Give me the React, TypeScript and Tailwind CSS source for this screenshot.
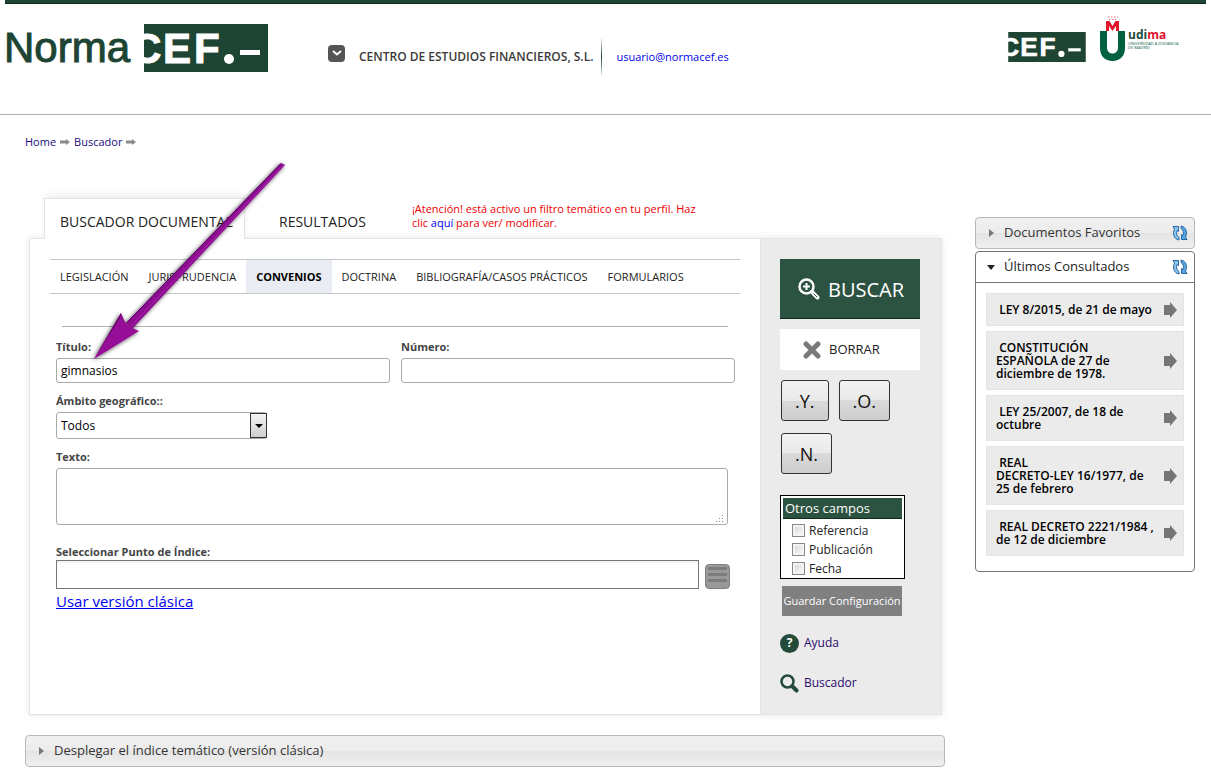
import React, { useState } from "react";

const categories = [
  "LEGISLACIÓN",
  "JURISPRUDENCIA",
  "CONVENIOS",
  "DOCTRINA",
  "BIBLIOGRAFÍA/CASOS PRÁCTICOS",
  "FORMULARIOS",
];

const recentDocs = [
  "LEY 8/2015, de 21 de mayo",
  "CONSTITUCIÓN\nESPAÑOLA de 27 de\ndiciembre de 1978.",
  "LEY 25/2007, de 18 de\noctubre",
  "REAL\nDECRETO-LEY 16/1977, de\n25 de febrero",
  "REAL DECRETO 2221/1984 ,\nde 12 de diciembre",
];

const CefLogo = ({ className }: { className?: string }) => (
  <svg viewBox="0 0 124 48" className={className} role="img" aria-label="CEF.-">
    <rect width="124" height="48" fill="#1e4433" />
    <g
      fill="#fff"
      stroke="#fff"
      strokeWidth="1"
      fontFamily="Liberation Sans, sans-serif"
      fontWeight="700"
      fontSize="42"
    >
      <text x="-13" y="39">C</text>
      <text x="19" y="39">E</text>
      <text x="50" y="39">F</text>
    </g>
    <circle cx="85" cy="35" r="5" fill="#fff" />
    <rect x="96" y="26" width="20" height="5" fill="#fff" />
  </svg>
);

const NormaLogo = () => (
  <svg viewBox="0 0 134 48" className="h-12 w-[134px]" role="img" aria-label="Norma">
    <text
      x="2"
      y="38"
      fill="#1e4433"
      stroke="#1e4433"
      strokeWidth="1"
      fontFamily="Liberation Sans, sans-serif"
      fontSize="42"
    >
      Norma
    </text>
  </svg>
);

const UdimaLogo = () => (
  <svg viewBox="0 0 80 46" className="h-[46px] w-20" role="img" aria-label="udima">
    <path d="M0 15h7v17a5.500 5.500 0 0 0 11 0V15h7v17c0 8-5 13-12.500 13S0 40 0 32z" fill="#04613f" />
    <path d="M6 15V5h3.500l3 5 3-5H19v10h-3v-5l-3.500 5L9 10v5z" fill="#e2142d" />
    <path d="M8 1h1.500M11 1h1.500M14 1h1.500M17 1h1M9 3.500h1.500M12 3.500h1.500M15 3.500h1.500" stroke="#ee7584" strokeWidth="1.200" />
    <text x="28" y="23" fontFamily="Open Sans, sans-serif" fontWeight="700" fontSize="12" fill="#214c3a">
      udi<tspan fill="#e2142d">ma</tspan>
    </text>
    <text x="28" y="29" fontFamily="Open Sans, sans-serif" fontSize="4" fill="#04613f">
      UNIVERSIDAD A DISTANCIA
    </text>
    <text x="28" y="33" fontFamily="Open Sans, sans-serif" fontSize="4" fill="#04613f">
      DE MADRID
    </text>
  </svg>
);

const CrumbArrow = () => (
  <svg viewBox="0 0 10 6" className="h-1.5 w-2.5" aria-hidden="true">
    <path d="M0 1.500h6V0l4 3-4 3V4.500H0z" fill="#8a8a8a" />
  </svg>
);

const RefreshIcon = () => (
  <svg viewBox="0 0 16 16" className="size-4" fill="#8cc4ec" stroke="#2468a4" strokeWidth="1" aria-hidden="true">
    <path d="M1 1.500h5.500v5L5 5.500C4 8.500 4.500 11 7 12.500v2.500C1.500 14 .5 8 2.500 4z" />
    <path d="M1 1.500h5.500v5L5 5.500C4 8.500 4.500 11 7 12.500v2.500C1.500 14 .5 8 2.500 4z" fill="#5aa5dd" transform="rotate(180 8 8)" />
  </svg>
);

const SearchPlusIcon = () => (
  <svg viewBox="0 0 22 22" className="size-[22px]" fill="none" stroke="#fff" aria-hidden="true">
    <circle cx="8.500" cy="8.500" r="7" strokeWidth="2.500" />
    <path d="M8.500 5v7M5 8.500h7" strokeWidth="2" />
    <path d="M14 14l5.500 5.500" strokeWidth="4" strokeLinecap="round" />
    <path d="M15.500 15.500l3.500 3.500" stroke="#2c5341" strokeWidth="1" />
  </svg>
);

const Annotation = () => (
  <svg
    viewBox="0 0 210 210"
    className="pointer-events-none absolute left-[85px] top-[157px] z-20 size-[210px]"
    aria-hidden="true"
  >
    <defs>
      <filter id="shade" x="-20%" y="-20%" width="140%" height="140%">
        <feDropShadow dx="-1" dy="1" stdDeviation="2" floodColor="#000" floodOpacity="0.7" />
      </filter>
    </defs>
    <g filter="url(#shade)">
      <path d="M196 6l4 2L47 172l-6-6z" fill="#8d0d91" />
      <path d="M196 6.500L41 166.500" stroke="#560560" strokeWidth="1" />
      <path d="M198.500 8L46 169" stroke="#ab22ae" strokeWidth="1" />
      <path d="M9 202l27-46 4 9 5 5 9 4z" fill="#960a98" />
      <path d="M9 202l27-46v3z" fill="#5a0660" />
    </g>
  </svg>
);

const Header = () => (
  <header className="border-b border-[#b0b0b0]">
    <div className="mx-[5px] h-1 border-b border-[#0d2a1c] bg-[#1e4433]" />
    <div className="flex h-[110px] items-start pl-0.5 pr-[31px] pt-5">
      <a href="#inicio" className="flex shrink-0 gap-2">
        <NormaLogo />
        <CefLogo className="h-12 w-[124px]" />
      </a>
      <div className="ml-[60px] mt-[13px] flex h-10 items-center">
        <button
          type="button"
          aria-label="Abrir menú"
          className="mb-2 flex size-[17px] items-center justify-center rounded bg-[#555]"
        >
          <svg viewBox="0 0 10 6" className="h-1.5 w-2.5" fill="none" stroke="#fff" strokeWidth="2" aria-hidden="true">
            <path d="M1 1l4 3.500L9 1" />
          </svg>
        </button>
        <span className="ml-3.5 whitespace-nowrap text-xs font-semibold text-[#3a3a3a]">
          CENTRO DE ESTUDIOS FINANCIEROS, S.L.
        </span>
        <span className="ml-2 h-10 w-px bg-linear-to-b from-white via-[#1e4433] to-white" />
        <a href="#usuario" className="ml-3.5 text-[11px] text-[#00e]">
          usuario@normacef.es
        </a>
      </div>
      <div className="ml-auto flex gap-3.5">
        <CefLogo className="mt-2 h-[30px] w-[78px]" />
        <div className="-mt-2">
          <UdimaLogo />
        </div>
      </div>
    </div>
  </header>
);

const labelClass = "block text-[11px] font-bold leading-4 text-[#444]";
const fieldClass = "block w-full rounded-[3px] border border-[#aaa] bg-white px-1 text-xs text-black";

const SearchForm = () => (
  <div className="px-[26px] pt-8">
    <div className="mx-1.5 border-t border-[#b0b0b0]" />
    <div className="-mr-px mt-3 grid grid-cols-2 gap-x-[11px]">
      <div>
        <label htmlFor="titulo" className={labelClass}>Título:</label>
        <input id="titulo" type="text" defaultValue="gimnasios" className={`${fieldClass} mt-[3px] h-[25px]`} />
      </div>
      <div>
        <label htmlFor="numero" className={labelClass}>Número:</label>
        <input id="numero" type="text" className={`${fieldClass} mt-[3px] h-[25px]`} />
      </div>
    </div>
    <label htmlFor="ambito" className={`${labelClass} mt-2.5`}>Ámbito geográfico::</label>
    <div className="relative mt-[3px] w-[211px]">
      <select id="ambito" className={`${fieldClass} h-[27px] appearance-none`}>
        <option>Todos</option>
      </select>
      <span className="pointer-events-none absolute inset-y-px right-0 flex w-[17px] items-center justify-center border border-[#333] bg-linear-to-b from-[#f2f2f2] to-[#cfcfcf]">
        <svg viewBox="0 0 8 4" className="h-1 w-2" aria-hidden="true">
          <path d="M0 0h8L4 4z" />
        </svg>
      </span>
    </div>
    <label htmlFor="texto" className={`${labelClass} mt-2.5`}>Texto:</label>
    <div className="relative mr-1.5 mt-[3px]">
      <textarea id="texto" className={`${fieldClass} h-[57px] resize-none`} />
      <svg viewBox="0 0 9 9" className="pointer-events-none absolute bottom-0.5 right-1 size-[9px]" fill="#888" aria-hidden="true">
        <path d="M7 1h1v1H7zM7 4h1v1H7zM7 7h1v1H7zM4 4h1v1H4zM4 7h1v1H4zM1 7h1v1H1z" />
      </svg>
    </div>
    <label htmlFor="indice" className={`${labelClass} mt-[19px]`}>Seleccionar Punto de Índice:</label>
    <div className="mr-1 flex items-end gap-1.5">
      <input
        id="indice"
        type="text"
        className="h-[29px] min-w-0 flex-1 border border-[#777] bg-white px-1 text-xs shadow-[inset_0_2px_1px_#f2f2f2]"
      />
      <button
        type="button"
        aria-label="Ver índice"
        className="flex size-[25px] flex-col items-center gap-[3px] rounded border border-[#808080] bg-[#999] pt-0.5"
      >
        <span className="h-[3px] w-[19px] bg-[#7c7c7c]" />
        <span className="h-[3px] w-[19px] bg-[#7c7c7c]" />
        <span className="h-[3px] w-[19px] bg-[#7c7c7c]" />
      </button>
    </div>
    <a href="#clasica" className="inline-block text-[15px] leading-[22px] text-[#00e] underline">
      Usar versión clásica
    </a>
  </div>
);

const operatorClass =
  "h-[41px] rounded-[3px] border border-[#333] bg-[linear-gradient(#f2f2f2,#e9e9e9_50%,#dadada_50%,#cdcdcd)] px-[13px] text-lg text-[#111]";

const Actions = () => (
  <aside className="w-[181px] shrink-0 border-l border-[#e4e4e4] bg-[#ebebeb] pl-[19px] pt-5">
    <button type="submit" className="flex h-[60px] w-[140px] items-center border-b border-[#0d2a1c] bg-[#2c5341] pl-[18px] text-xl text-white">
      <SearchPlusIcon />
      <span className="ml-2 pt-0.5">BUSCAR</span>
    </button>
    <button type="reset" className="mt-2.5 flex h-[41px] w-[140px] items-center bg-white pl-[23px] text-[13px] text-[#222]">
      <svg viewBox="0 0 18 18" className="size-[18px]" stroke="#7a7a7a" strokeWidth="5" strokeLinecap="round" aria-hidden="true">
        <path d="M3 3l12 12M15 3L3 15" />
      </svg>
      <span className="ml-2">BORRAR</span>
    </button>
    <div className="ml-px mt-2.5 flex w-32 flex-wrap gap-x-2.5 gap-y-3">
      <button type="button" className={operatorClass}>.Y.</button>
      <button type="button" className={operatorClass}>.O.</button>
      <button type="button" className={operatorClass}>.N.</button>
    </div>
    <fieldset className="mt-[21px] w-[125px] border border-black bg-white p-0.5 pb-0">
      <div className="flex h-[21px] items-center border-b border-[#0d2a1c] bg-[#2c5341] pl-0.5 pt-0.5 text-[13px] text-white">Otros campos</div>
      <div className="pl-[9px] pt-0.5">
        {["Referencia", "Publicación", "Fecha"].map((field) => (
          <label key={field} className="flex h-[19px] items-center gap-1 text-xs text-[#222]">
            <input
              type="checkbox"
              className="size-[13px] appearance-none border border-[#888] bg-linear-to-br from-[#cfd3d8] to-white shadow-[inset_0_0_0_2px_#f4f4f4] checked:bg-[#2c5341]"
            />
            {field}
          </label>
        ))}
      </div>
    </fieldset>
    <button type="button" className="ml-0.5 mt-[7px] h-[30px] w-[120px] whitespace-nowrap bg-[#808080] text-[11px] text-white">
      Guardar Configuración
    </button>
    <a href="#ayuda" className="mt-[15px] flex h-6 items-center gap-[5px] text-xs text-[#2a0a6e]">
      <span className="flex size-[19px] items-center justify-center rounded-full bg-[#234b39] text-xs font-bold text-white">?</span>
      Ayuda
    </a>
    <a href="#buscador" className="mt-4 flex h-6 items-center gap-[5px] text-xs text-[#2a0a6e]">
      <svg viewBox="0 0 19 19" className="size-[19px]" fill="none" stroke="#234b39" aria-hidden="true">
        <circle cx="7.500" cy="7.500" r="6" strokeWidth="2.500" />
        <path d="M12.500 12.500l4 4" strokeWidth="4" strokeLinecap="round" />
      </svg>
      Buscador
    </a>
  </aside>
);

const SearchPanel = () => {
  const [active, setActive] = useState("CONVENIOS");

  return (
    <div className="pl-1 pr-[3px]">
      <div className="flex h-10 items-stretch pl-[15px]">
        <button
          type="button"
          className="relative z-10 -mb-px w-[201px] whitespace-nowrap border-x border-t border-[#e4e4e4] bg-white pl-[15px] pt-1.5 text-left text-sm text-[#222] shadow-[0_-4px_8px_-2px_#e8e8e8]"
        >
          BUSCADOR DOCUMENTAL
        </button>
        <button type="button" className="px-[34px] pt-2 text-sm text-[#222]">
          RESULTADOS
        </button>
        <p className="ml-3 w-[300px] pt-1 text-[11px] leading-[14px] text-[#e00]">
          ¡Atención! está activo un filtro temático en tu perfil. Haz clic{" "}
          <a href="#filtro" className="text-[#00e]">aquí</a> para ver/ modificar.
        </p>
      </div>
      <form
        className="flex min-h-[477px] border border-[#e4e4e4] bg-white shadow-[0_0_8px_#e8e8e8]"
        onSubmit={(e) => e.preventDefault()}
      >
        <div className="min-w-0 flex-1 pt-5">
          <nav className="mx-5 flex h-[35px] border-y border-[#c6c6c6]">
            {categories.map((name) => (
              <button
                key={name}
                type="button"
                onClick={() => setActive(name)}
                className={`whitespace-nowrap px-2.5 pt-0.5 text-[11px] ${
                  name === active ? "bg-[#e9ecf2] font-bold text-black" : "text-[#222]"
                }`}
              >
                {name}
              </button>
            ))}
          </nav>
          <SearchForm />
        </div>
        <Actions />
      </form>
    </div>
  );
};

const barClass = "flex h-8 w-full items-center rounded border border-[#b8b8b8] bg-[linear-gradient(#f0f0f0,#ececec_50%,#e4e4e4_50%,#efefef)] text-left text-[13px] text-[#333]";

const RecentDocuments = () => (
  <aside className="mt-[102px] w-[220px] shrink-0">
    <div className={`${barClass} pl-[13px] pr-1.5`}>
      <button type="button" className="flex flex-1 items-center">
        <svg viewBox="0 0 5 8" className="h-2 w-[5px]" fill="#777" aria-hidden="true">
          <path d="M0 0l5 4-5 4z" />
        </svg>
        <span className="ml-2.5">Documentos Favoritos</span>
      </button>
      <button type="button" aria-label="Actualizar favoritos"><RefreshIcon /></button>
    </div>
    <section className="mt-0.5 rounded border border-[#777]">
      <div className="flex h-[31px] items-center border-b border-[#777] pl-[11px] pr-1.5 text-[13px] text-[#222]">
        <button type="button" className="flex flex-1 items-center">
          <svg viewBox="0 0 8 5" className="h-[5px] w-2" fill="#222" aria-hidden="true">
            <path d="M0 0h8L4 5z" />
          </svg>
          <span className="ml-[9px]">Últimos Consultados</span>
        </button>
        <button type="button" aria-label="Actualizar consultados"><RefreshIcon /></button>
      </div>
      <ul className="flex flex-col gap-[5px] px-2.5 pb-[15px] pt-2.5">
        {recentDocs.map((doc) => (
          <li key={doc}>
            <a
              href="#documento"
              className="flex items-center justify-between border border-[#e4e4e4] bg-[#ebebeb] pl-[9px] pr-1.5 text-xs font-semibold leading-[13px] text-black"
            >
              <span className="whitespace-pre-line py-[9px]">&nbsp;{doc}</span>
              <svg viewBox="0 0 13 16" className="h-4 w-[13px] shrink-0" fill="#757575" aria-hidden="true">
                <path d="M0 3h6V0l7 8-7 8v-3H0z" />
              </svg>
            </a>
          </li>
        ))}
      </ul>
    </section>
  </aside>
);

export default function App() {
  return (
    <div className="relative bg-white pb-3 font-['Open_Sans','Noto_Sans',sans-serif]">
      <Header />
      <div className="flex gap-[30px] pl-[25px] pr-4">
        <main className="min-w-0 flex-1">
          <nav aria-label="Ruta" className="mb-12 mt-[19px] flex h-4 items-center gap-1 text-[11px] text-[#1a0a7e]">
            <a href="#home">Home</a>
            <CrumbArrow />
            <a href="#buscador">Buscador</a>
            <CrumbArrow />
          </nav>
          <SearchPanel />
          <button type="button" className={`${barClass} mt-5 pl-[13px]`}>
            <svg viewBox="0 0 5 8" className="h-2 w-[5px]" fill="#777" aria-hidden="true">
              <path d="M0 0l5 4-5 4z" />
            </svg>
            <span className="ml-2.5">Desplegar el índice temático (versión clásica)</span>
          </button>
        </main>
        <RecentDocuments />
      </div>
      <Annotation />
    </div>
  );
}
